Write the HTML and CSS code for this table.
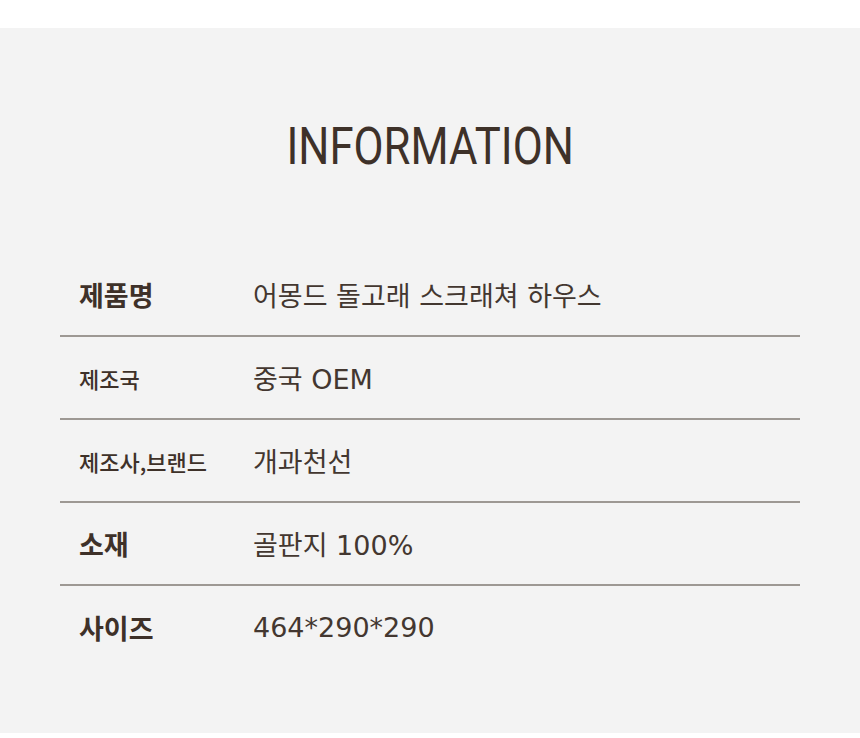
FILE: index.html
```html
<!DOCTYPE html>
<html lang="ko">
<head>
<meta charset="utf-8">
<link rel="stylesheet" href="styles.css">
</head>
<body>
<div class="top"></div>
<section class="info">
  <h1 class="title"><span class="title-text">INFORMATION</span></h1>
  <div class="table">
    <div class="row">
      <div class="label big">제품명</div>
      <div class="value">어몽드 돌고래 스크래쳐 하우스</div>
    </div>
    <div class="row">
      <div class="label small">제조국</div>
      <div class="value">중국 OEM</div>
    </div>
    <div class="row">
      <div class="label small">제조사,브랜드</div>
      <div class="value">개과천선</div>
    </div>
    <div class="row">
      <div class="label big">소재</div>
      <div class="value">골판지 100%</div>
    </div>
    <div class="row last">
      <div class="label big">사이즈</div>
      <div class="value">464*290*290</div>
    </div>
  </div>
</section>
</body>
</html>
```
FILE: styles.css
```css
html, body {
  margin: 0;
  padding: 0;
  background: #ffffff;
}
body {
  font-family: "Noto Sans CJK KR", "Noto Sans", sans-serif;
  color: #3e3129;
}
.top {
  height: 28px;
}
.info {
  background: #f3f3f3;
  height: 705px;
  box-sizing: border-box;
  padding-top: 84px;
}
.title {
  margin: 0;
  text-align: center;
  font-family: Roboto, "Liberation Sans", sans-serif;
  font-weight: 400;
  font-size: 52px;
  line-height: 70px;
  color: #3e3129;
}
.title-text {
  display: inline-block;
  transform: scaleX(0.84);
}
.table {
  margin: 72px 60px 0;
}
.row {
  display: flex;
  align-items: center;
  height: 83px;
  border-bottom: 2px solid #9d9893;
  box-sizing: border-box;
}
.row.last {
  border-bottom: none;
}
.label {
  width: 174px;
  padding-left: 19px;
  flex: none;
}
.label.big {
  font-size: 27px;
  font-weight: 700;
}
.label.small {
  font-size: 22px;
  font-weight: 500;
}
.value {
  font-family: "DejaVu Sans", "Noto Sans CJK KR", sans-serif;
  font-size: 27px;
  font-weight: 400;
  color: #433730;
}
```
